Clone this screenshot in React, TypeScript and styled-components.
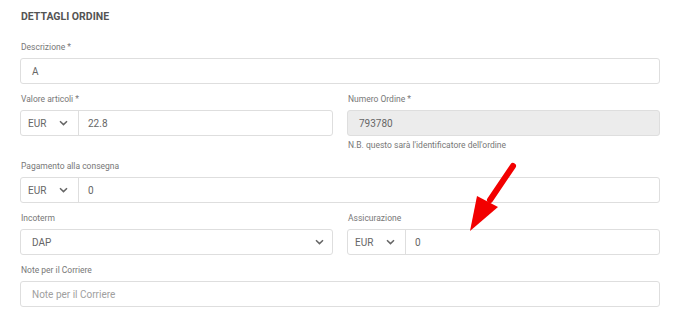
import React from 'react';
import styled, { createGlobalStyle } from 'styled-components';

const GlobalStyle = createGlobalStyle`
  html, body {
    margin: 0;
    padding: 0;
    background: #ffffff;
    font-family: Roboto, "Liberation Sans", sans-serif;
  }
`;

const Chevron = () => (
  <svg width="9" height="6" viewBox="0 0 9 6">
    <path d="M1 1.2 L4.5 4.6 L8 1.2" fill="none" stroke="#666" strokeWidth="1.5" />
  </svg>
);

const Arrow = () => (
  <ArrowSvg width="60" height="80" viewBox="0 0 60 80">
    <line x1="53" y1="6" x2="30" y2="40" stroke="#f20000" strokeWidth="6" strokeLinecap="round" />
    <polygon points="17,36 38,47 10,71" fill="#f20000" />
  </ArrowSvg>
);

const App = () => {
  return (
    <Page>
      <GlobalStyle />
      <Title>DETTAGLI ORDINE</Title>
      <Grid>
        <Field $wide>
          <Label>Descrizione *</Label>
          <Box>
            <Value>A</Value>
          </Box>
        </Field>

        <Field>
          <Label>Valore articoli *</Label>
          <Box>
            <Currency>
              <span>EUR</span>
              <Chevron />
            </Currency>
            <Value $tight>22.8</Value>
          </Box>
        </Field>
        <Field>
          <Label>Numero Ordine *</Label>
          <Box $disabled>
            <Value>793780</Value>
          </Box>
          <Help>N.B. questo sarà l'identificatore dell'ordine</Help>
        </Field>

        <Field $wide>
          <Label>Pagamento alla consegna</Label>
          <Box>
            <Currency>
              <span>EUR</span>
              <Chevron />
            </Currency>
            <Value $tight>0</Value>
          </Box>
        </Field>

        <Field>
          <Label>Incoterm</Label>
          <Box>
            <Value>DAP</Value>
            <SelectIcon>
              <Chevron />
            </SelectIcon>
          </Box>
        </Field>
        <Field>
          <Label>Assicurazione</Label>
          <Box>
            <Currency>
              <span>EUR</span>
              <Chevron />
            </Currency>
            <Value $tight>0</Value>
          </Box>
        </Field>

        <Field $wide>
          <Label>Note per il Corriere</Label>
          <Box>
            <Value $placeholder>Note per il Corriere</Value>
          </Box>
        </Field>
      </Grid>
      <Arrow />
    </Page>
  );
};

export default App;

const Page = styled.div`
  position: relative;
  width: 688px;
  height: 314px;
  box-sizing: border-box;
  padding: 10px 28px 0 20px;
  overflow: hidden;
`;

const Title = styled.div`
  font-size: 10.5px;
  font-weight: 700;
  line-height: 14px;
  color: #545454;
  margin-bottom: 17px;
  padding-left: 1px;
`;

const Grid = styled.div`
  display: grid;
  grid-template-columns: 313px 313px;
  column-gap: 14px;
  row-gap: 9px;
`;

const Field = styled.div<{ $wide?: boolean }>`
  grid-column: ${(p) => (p.$wide ? '1 / span 2' : 'auto')};
  display: flex;
  flex-direction: column;
`;

const Label = styled.div`
  font-size: 8.5px;
  line-height: 12px;
  color: #777;
  margin-bottom: 5px;
  padding-left: 1px;
`;

const Box = styled.div<{ $disabled?: boolean }>`
  display: flex;
  align-items: center;
  height: 26px;
  box-sizing: border-box;
  border: 1px solid #dedede;
  border-radius: 3px;
  background: ${(p) => (p.$disabled ? '#ececec' : '#ffffff')};
`;

const Currency = styled.div`
  display: flex;
  align-items: center;
  justify-content: space-between;
  width: 58px;
  height: 100%;
  box-sizing: border-box;
  padding: 0 10px 0 7px;
  border-right: 1px solid #dedede;
  font-size: 10px;
  color: #666;
`;

const Value = styled.div<{ $tight?: boolean; $placeholder?: boolean }>`
  flex: 1;
  padding-left: ${(p) => (p.$tight ? '9px' : '11px')};
  font-size: 10px;
  color: ${(p) => (p.$placeholder ? '#a0a0a0' : '#666')};
`;

const SelectIcon = styled.div`
  display: flex;
  align-items: center;
  padding-right: 8px;
`;

const Help = styled.div`
  font-size: 8.5px;
  line-height: 12px;
  color: #777;
  margin-top: 3px;
  padding-left: 1px;
`;

const ArrowSvg = styled.svg`
  position: absolute;
  left: 460px;
  top: 160px;
`;
